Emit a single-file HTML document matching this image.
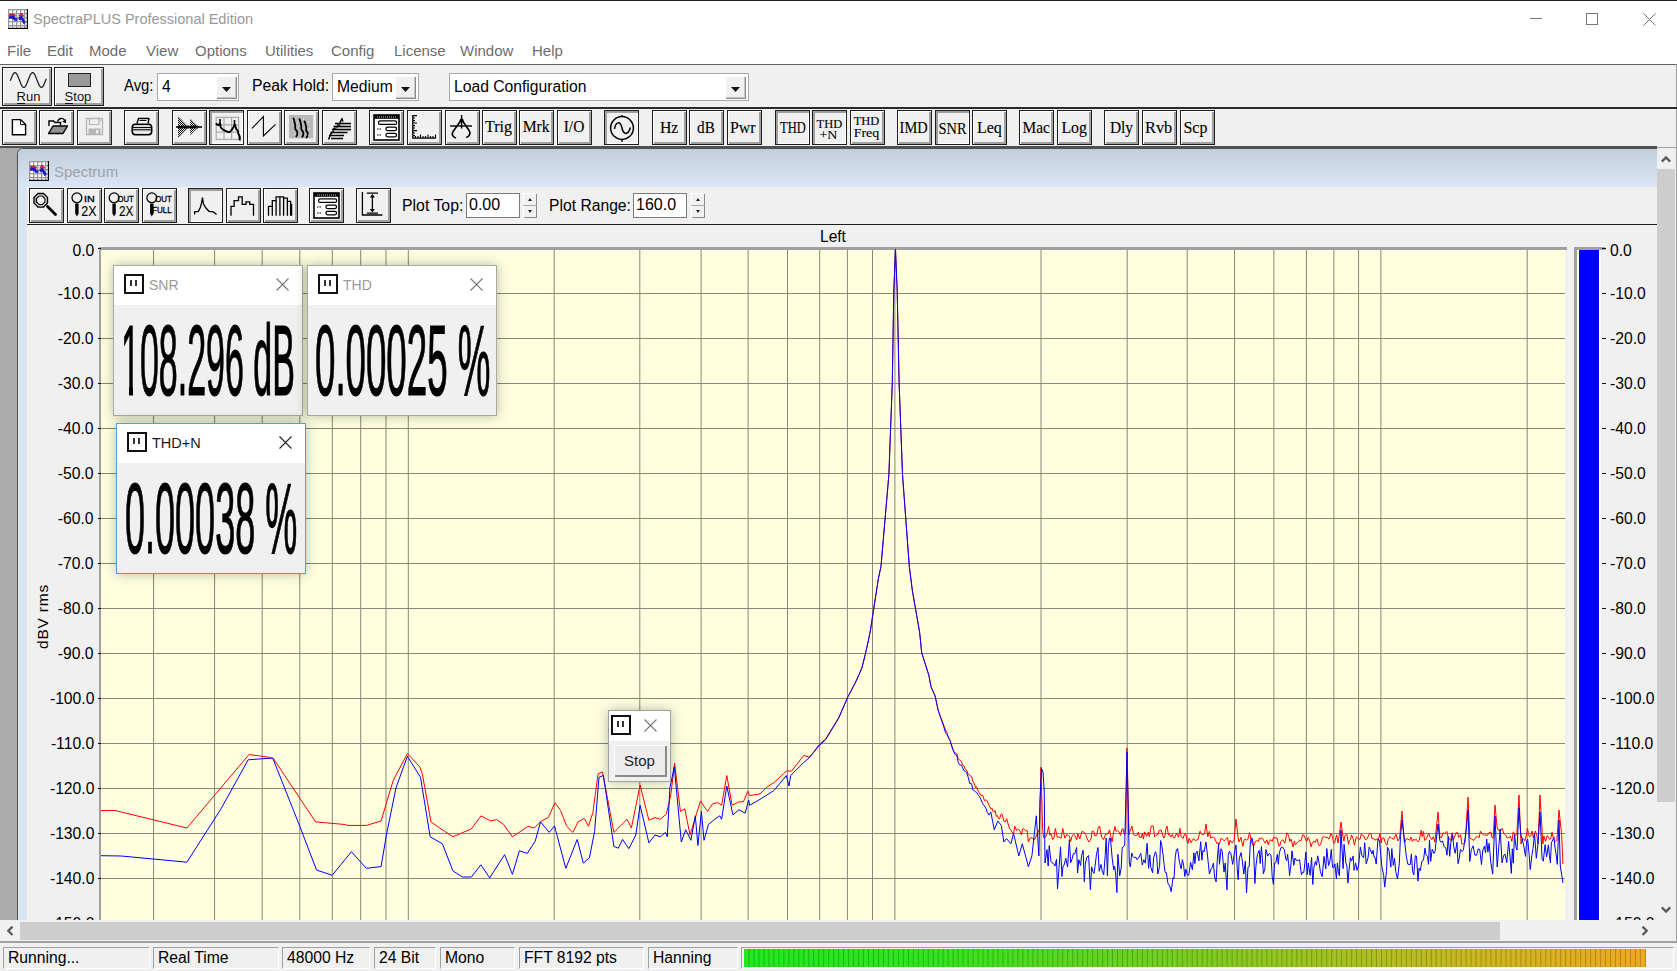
<!DOCTYPE html><html><head><meta charset="utf-8"><title>SpectraPLUS</title><style>
*{margin:0;padding:0;box-sizing:border-box}
html,body{width:1677px;height:971px;overflow:hidden;background:#f0f0f0;font-family:"Liberation Sans",sans-serif;}
.a{position:absolute}
.t{position:absolute;white-space:nowrap;line-height:1}
.btn{position:absolute;width:35px;height:35px;background:#f0f0f0;border:1px solid #1e1e1e;
 box-shadow: inset 1px 1px 0 #fff, inset -2px -2px 0 #a0a0a0;}
.btn.p{box-shadow: inset 2px 2px 0 #a0a0a0, inset -1px -1px 0 #fff;}
.btn svg{position:absolute;left:0;top:0}
.bt{position:absolute;left:0;right:0;text-align:center;font-family:"Liberation Serif",serif;color:#000;white-space:nowrap;line-height:1}
.combo{position:absolute;background:#fff;border:1px solid #a8a8a8;}
.dd{position:absolute;background:#f0f0f0;box-shadow: inset 1px 1px 0 #fff, inset -1px -1px 0 #888, inset -2px -2px 0 #c8c8c8;}
.sp{position:absolute;background:#f0f0f0;}
.panel{position:absolute;background:#f0f0f0;border:1px solid #a0a0a0;box-shadow:0 0 12px rgba(0,0,0,.28);}
.ptitle{position:absolute;left:0;top:0;right:0;background:#fff}
.pbox{position:absolute;border:2px solid #1a1a1a;width:20px;height:20px}
.pbox:before,.pbox:after{content:"";position:absolute;top:5px;width:2px;height:6px;background:#333}
.pbox:before{left:5px}.pbox:after{left:10px}
.sb{position:absolute;top:947px;height:22px;border-top:1px solid #a0a0a0;border-left:1px solid #a0a0a0;border-right:1px solid #fff;border-bottom:1px solid #fff}
.sbt{position:absolute;top:2px;left:4px;font-size:16px;transform:scaleX(0.98);transform-origin:0 0;color:#000;white-space:nowrap;line-height:1}
</style></head><body>
<div class="a" style="left:0;top:0;width:1677px;height:1px;background:#222"></div>
<div class="a" style="left:0;top:1px;width:1677px;height:63px;background:#fff"></div>
<svg class="a" style="left:8px;top:9px" width="20" height="20" viewBox="0 0 20 20"><rect x="0" y="0" width="20" height="20" fill="#fff"/><rect x="0" y="0" width="1.3" height="20" fill="#999"/><rect x="0" y="0" width="20" height="1.3" fill="#999"/><rect x="4" y="0" width="1.3" height="20" fill="#999"/><rect x="0" y="4" width="20" height="1.3" fill="#999"/><rect x="8" y="0" width="1.3" height="20" fill="#999"/><rect x="0" y="8" width="20" height="1.3" fill="#999"/><rect x="12" y="0" width="1.3" height="20" fill="#999"/><rect x="0" y="12" width="20" height="1.3" fill="#999"/><rect x="16" y="0" width="1.3" height="20" fill="#999"/><rect x="0" y="16" width="20" height="1.3" fill="#999"/><polyline points="1,5.8 5.5,5.8 7.5,7.5" fill="none" stroke="#d0203a" stroke-width="2.2"/><polyline points="11,7.5 13,5 15.5,7.5" fill="none" stroke="#d0203a" stroke-width="2"/><polyline points="1,8.5 5,8.2 7,10.5 9.5,10.5" fill="none" stroke="#1818c8" stroke-width="2.6"/><polyline points="11,10.5 13,8.5 15,11 16.5,14.5" fill="none" stroke="#1818d0" stroke-width="2.6"/><rect x="18.8" y="0" width="1.2" height="20" fill="#000"/><rect x="0" y="18.8" width="20" height="1.2" fill="#000"/></svg>
<div class="t" style="left:33px;top:12px;font-size:14.5px;color:#999">SpectraPLUS Professional Edition</div>
<div class="a" style="left:1530px;top:18px;width:12px;height:1px;background:#777"></div>
<div class="a" style="left:1586px;top:13px;width:12px;height:12px;border:1px solid #777"></div>
<svg class="a" style="left:1643px;top:13px" width="13" height="13"><path d="M0.5 0.5L12.5 12.5M12.5 0.5L0.5 12.5" stroke="#777" stroke-width="1"/></svg>
<div class="t" style="left:7px;top:43px;font-size:15px;color:#6d6d6d">File</div>
<div class="t" style="left:47px;top:43px;font-size:15px;color:#6d6d6d">Edit</div>
<div class="t" style="left:89px;top:43px;font-size:15px;color:#6d6d6d">Mode</div>
<div class="t" style="left:146px;top:43px;font-size:15px;color:#6d6d6d">View</div>
<div class="t" style="left:195px;top:43px;font-size:15px;color:#6d6d6d">Options</div>
<div class="t" style="left:265px;top:43px;font-size:15px;color:#6d6d6d">Utilities</div>
<div class="t" style="left:331px;top:43px;font-size:15px;color:#6d6d6d">Config</div>
<div class="t" style="left:394px;top:43px;font-size:15px;color:#6d6d6d">License</div>
<div class="t" style="left:460px;top:43px;font-size:15px;color:#6d6d6d">Window</div>
<div class="t" style="left:532px;top:43px;font-size:15px;color:#6d6d6d">Help</div>
<div class="a" style="left:0;top:64px;width:1677px;height:1px;background:#646464"></div>
<div class="a" style="left:1676px;top:64px;width:1px;height:84px;background:#a0a0a0"></div>
<div class="btn" style="left:2px;top:67px;width:50px;height:39px"><svg width="50" height="39" style="position:absolute;left:-1px;top:-1px"><polyline points="8.3,13.8 8.8,12.5 9.3,11.2 9.8,9.9 10.3,8.8 10.8,7.8 11.3,6.9 11.8,6.3 12.3,5.8 12.8,5.6 13.3,5.6 13.8,5.9 14.3,6.4 14.8,7.1 15.3,8.0 15.8,9.0 16.3,10.2 16.8,11.4 17.3,12.7 17.8,14.1 18.3,15.3 18.8,16.5 19.3,17.6 19.8,18.6 20.3,19.4 20.8,19.9 21.3,20.3 21.8,20.4 22.3,20.3 22.8,19.9 23.3,19.4 23.8,18.6 24.3,17.6 24.8,16.5 25.3,15.3 25.8,14.1 26.3,12.7 26.8,11.4 27.3,10.2 27.8,9.0 28.3,8.0 28.8,7.1 29.3,6.4 29.8,5.9 30.3,5.6 30.8,5.6 31.3,5.8 31.8,6.3 32.3,6.9 32.8,7.8 33.3,8.8 33.8,9.9 34.3,11.2 34.8,12.5 35.3,13.8 35.8,15.1 36.3,16.3 36.8,17.4 37.3,18.4 37.8,19.2 38.3,19.8 38.8,20.2 39.3,20.4 39.8,20.3 40.3,20.0 40.8,19.5 41.3,18.8 41.8,17.8 42.3,16.8 42.8,15.6 43.3,14.3 43.8,13.0 44.3,11.7" fill="none" stroke="#222" stroke-width="1.3"/></svg><div class="t" style="left:13.6px;top:22px;font-size:13px;color:#111">Run</div><div class="a" style="left:14px;top:34.5px;width:8px;height:1px;background:#111"></div></div>
<div class="btn" style="left:54px;top:67px;width:50px;height:39px"><div class="a" style="left:13px;top:5px;width:23px;height:14px;background:#999;border:1.5px solid #222"></div><div class="t" style="left:9.6px;top:22px;font-size:13px;color:#111">Stop</div><div class="a" style="left:9.5px;top:34.5px;width:8.5px;height:1px;background:#111"></div></div>
<div class="t" style="left:124px;top:78px;font-size:16px;color:#000;transform:scaleX(0.93);transform-origin:0 0">Avg:</div>
<div class="combo" style="left:157px;top:73px;width:82px;height:28px"><div class="t" style="left:4px;top:4.5px;font-size:16px;color:#000;transform:scaleX(0.98);transform-origin:0 0">4</div><div class="dd" style="left:58px;top:2px;width:21px;height:23px"><svg width="21" height="23" class="a" style="left:0;top:0"><path d="M6 11h9l-4.5 5z" fill="#111"/></svg></div></div>
<div class="t" style="left:252px;top:78px;font-size:16px;color:#000;transform:scaleX(0.985);transform-origin:0 0">Peak Hold:</div>
<div class="combo" style="left:332px;top:73px;width:87px;height:28px"><div class="t" style="left:4px;top:4.5px;font-size:16px;color:#000;transform:scaleX(0.98);transform-origin:0 0">Medium</div><div class="dd" style="left:62px;top:2px;width:21px;height:23px"><svg width="21" height="23" class="a" style="left:0;top:0"><path d="M6 11h9l-4.5 5z" fill="#111"/></svg></div></div>
<div class="combo" style="left:449px;top:73px;width:300px;height:28px"><div class="t" style="left:4px;top:4.5px;font-size:16px;color:#000;transform:scaleX(0.98);transform-origin:0 0">Load Configuration</div><div class="dd" style="left:275px;top:2px;width:21px;height:23px"><svg width="21" height="23" class="a" style="left:0;top:0"><path d="M6 11h9l-4.5 5z" fill="#111"/></svg></div></div>
<div class="a" style="left:0;top:107px;width:1677px;height:2px;background:#2a2a2a"></div>
<div class="a" style="left:0;top:146px;width:1657px;height:2px;background:#505050"></div>
<div class="a" style="left:1657px;top:147px;width:20px;height:1px;background:#a0a0a0"></div>
<svg width="0" height="0" style="position:absolute"><defs><pattern id="dith" width="2" height="2" patternUnits="userSpaceOnUse"><rect width="1" height="1" fill="#000"/><rect x="1" y="1" width="1" height="1" fill="#000"/></pattern></defs></svg>
<div class="btn" style="left:2px;top:110px;width:35px;height:35px"><svg class="a" style="left:-1px;top:-1px" width="35" height="35" viewBox="0 0 35 35"><path d="M10.4 9.6h8.2l5 5v10.1h-13.2z" fill="#fff" stroke="#000" stroke-width="1.4"/><path d="M18.6 9.6v5h5" fill="none" stroke="#000" stroke-width="1"/></svg></div>
<div class="btn" style="left:39px;top:110px;width:35px;height:35px"><svg class="a" style="left:-1px;top:-1px" width="35" height="35" viewBox="0 0 35 35"><g transform="translate(0,-2.5)"><path d="M10 18.5v-5h4.5l1.5 1.5h5.5v3" fill="#fff" stroke="#000" stroke-width="1.4"/><path d="M9.5 26l4.5-7.5h14.5l-4.5 7.5z" fill="#909090" stroke="#000" stroke-width="1.4" stroke-linejoin="round"/><path d="M18.5 14c1.5-3.5 5-4 7-1.5" fill="none" stroke="#000" stroke-width="1.3"/><path d="M26.8 11.5l0.3 4.3-3.8-1.5z" fill="#000"/></g></svg></div>
<div class="btn" style="left:77px;top:110px;width:35px;height:35px"><svg class="a" style="left:-1px;top:-1px" width="35" height="35" viewBox="0 0 35 35"><g transform="translate(0,-1)"><path d="M9.5 9.5h16v16h-16z" fill="none" stroke="#b4b4b4" stroke-width="1.3"/><path d="M12.5 10v5.5h9.5v-5.5" fill="none" stroke="#b4b4b4" stroke-width="1.2"/><rect x="11.5" y="19.5" width="12" height="6" fill="#b4b4b4"/><rect x="19" y="21" width="2.5" height="3.5" fill="#eee"/><path d="M24 11v2" stroke="#b4b4b4"/></g></svg></div>
<div class="btn" style="left:124px;top:110px;width:35px;height:35px"><svg class="a" style="left:-1px;top:-1px" width="35" height="35" viewBox="0 0 35 35"><path d="M13 13.5l1.5-5h10.5l-1 5" fill="#fff" stroke="#000" stroke-width="1.4" stroke-linejoin="round"/><path d="M15.5 10.5h7" stroke="#000"/><rect x="8.2" y="14.2" width="19.5" height="10.5" rx="3.2" fill="#d8d8d8" stroke="#000" stroke-width="1.5"/><path d="M9 17.5h18M9 19.8h18" stroke="#000" stroke-width="1.1"/><path d="M10 22.2h16" stroke="#fff" stroke-width="1"/></svg></div>
<div class="btn" style="left:172px;top:110px;width:35px;height:35px"><svg class="a" style="left:-1px;top:-1px" width="35" height="35" viewBox="0 0 35 35"><path d="M6 6.5l10.5 10.5-10.5 10.5z" fill="url(#dith)" stroke="none"/><path d="M18.2 9l8 8-8 8z" fill="url(#dith)"/><path d="M4 17h26" stroke="#000" stroke-width="1.6"/><path d="M6 17h20" stroke="#000" stroke-width="3" stroke-dasharray="2.2 0.9"/><path d="M6 6.5l10.5 10.5-10.5 10.5M18.2 9l8 8-8 8" fill="none" stroke="#444" stroke-width="0.6"/></svg></div>
<div class="btn p" style="left:209px;top:110px;width:35px;height:35px"><svg class="a" style="left:-1px;top:-1px" width="35" height="35" viewBox="0 0 35 35"><rect x="7.2" y="7.4" width="22.4" height="22" fill="none" stroke="#aaa" stroke-width="1.2"/><path d="M15 7.4v22M22.6 7.4v22M7.2 14.8h22.4M7.2 22.2h22.4" stroke="#aaa" stroke-width="1.2"/><path d="M6.7 13.5l2 1.5 2.5-1 0.6 3.6 2.5 2.3 4 1.8 2.5 0.4 2.5-3 2.5-4.5 1.5 4.5 1.5 1.5 0.5 3 1.5 3v4" fill="none" stroke="#000" stroke-width="1.9" stroke-linejoin="round"/><path d="M11 9v7M25.5 10v6" stroke="#000" stroke-width="1.6"/></svg></div>
<div class="btn" style="left:247px;top:110px;width:35px;height:35px"><svg class="a" style="left:-1px;top:-1px" width="35" height="35" viewBox="0 0 35 35"><path d="M5 18.4L16.4 6.6V26L28.5 14.3" fill="none" stroke="#000" stroke-width="1.1"/></svg></div>
<div class="btn" style="left:284px;top:110px;width:35px;height:35px"><svg class="a" style="left:-1px;top:-1px" width="35" height="35" viewBox="0 0 35 35"><rect x="5" y="5" width="24.2" height="23.4" fill="#b8b8b8"/><path d="M9 8c2 2 1 4 2 6s-1 4 1 6 2 4 0 7" fill="none" stroke="#000" stroke-width="1.8"/><path d="M15 8.5c2 2 1 4 2 6s-1 4 1 6 2 4 0 7" fill="none" stroke="#000" stroke-width="1.8"/><path d="M20 11c2 2 1 3 2 5s-1 4 1 6 1 4-1 6" fill="none" stroke="#000" stroke-width="1.8"/><path d="M8 10h2M13 13h2M19 9h2M24 12h2M10 24h1M25 19h2M24 25h2" stroke="#fff" stroke-width="1" stroke-dasharray="1 1"/></svg></div>
<div class="btn" style="left:322px;top:110px;width:35px;height:35px"><svg class="a" style="left:-1px;top:-1px" width="35" height="35" viewBox="0 0 35 35"><path d="M13 13.5h16M11.5 16.5h17.5M10 19.5h19M8.5 22.5h17M7 25.5h15M9 28.5h12" stroke="#000" stroke-width="1.6"/><path d="M6.5 29.5l2.5-6 2-2 1-3 3-1 1-3 1.5 1 1-4 1.5-2.5 1 2.5" fill="none" stroke="#000" stroke-width="1.5"/><path d="M13 13.5h16M11.5 16.5h17.5M10 19.5h19" stroke="#888" stroke-width="0.6" transform="translate(0,1.2)"/></svg></div>
<div class="btn" style="left:369px;top:110px;width:35px;height:35px"><svg class="a" style="left:-1px;top:-1px" width="35" height="35" viewBox="0 0 35 35"><rect x="5" y="5" width="25" height="25" fill="#fff" stroke="#000" stroke-width="1.6"/><rect x="5" y="5" width="25" height="3.8" fill="#000"/><path d="M8 7h19" stroke="#fff" stroke-width="0.8" stroke-dasharray="1 1"/><rect x="9.6" y="10.8" width="18" height="3.6" rx="1.5" fill="#fff" stroke="#000" stroke-width="1.3"/><rect x="17" y="17.2" width="10.5" height="3.4" rx="1.5" fill="#fff" stroke="#000" stroke-width="1.3"/><rect x="17" y="23.4" width="10.5" height="3.4" rx="1.5" fill="#fff" stroke="#000" stroke-width="1.3"/><path d="M8 19h5M8 25h5" stroke="#000" stroke-width="1.2" stroke-dasharray="1.5 1"/></svg></div>
<div class="btn" style="left:407px;top:110px;width:35px;height:35px"><svg class="a" style="left:-1px;top:-1px" width="35" height="35" viewBox="0 0 35 35"><path d="M5.8 5v23.2h23" fill="none" stroke="#000" stroke-width="1.3"/><path d="M6 5.6h4M6 8h2M6 10.6h2M6 13h4M6 15.6h2M6 18h2M6 20.6h4M6 23h2M6 25.6h2" stroke="#000" stroke-width="1.1"/><path d="M8.5 28v-2M11 28v-2M13.5 28v-3.5M16 28v-2M18.5 28v-2M21 28v-3.5M23.5 28v-2M26 28v-2M28.5 28v-3.5" stroke="#000" stroke-width="1.1"/></svg></div>
<div class="btn" style="left:445px;top:110px;width:35px;height:35px"><svg class="a" style="left:-1px;top:-1px" width="35" height="35" viewBox="0 0 35 35"><path d="M16.6 5v13.5" stroke="#000" stroke-width="1.4"/><path d="M5 16h22" stroke="#000" stroke-width="1.4"/><path d="M16.6 9.5l-8.5 12c-2 3 0 6 3 6.5M16.6 9.5l7.5 11c2 3 0 6.5-3 7" fill="none" stroke="#000" stroke-width="1.6"/><circle cx="16.6" cy="10.5" r="2" fill="#000"/></svg></div>
<div class="btn" style="left:482px;top:110px;width:35px;height:35px"><svg class="a" style="left:-1px;top:-1px" width="35" height="35" viewBox="0 0 35 35"><text x="3.0" y="22.4" font-family="Liberation Serif" font-size="16" textLength="27.0" lengthAdjust="spacingAndGlyphs" fill="#000" stroke="#000" stroke-width="0.12" >Trig</text></svg></div>
<div class="btn" style="left:519px;top:110px;width:35px;height:35px"><svg class="a" style="left:-1px;top:-1px" width="35" height="35" viewBox="0 0 35 35"><text x="3.7" y="22.4" font-family="Liberation Serif" font-size="16" textLength="27.0" lengthAdjust="spacingAndGlyphs" fill="#000" stroke="#000" stroke-width="0.12" >Mrk</text></svg></div>
<div class="btn" style="left:557px;top:110px;width:35px;height:35px"><svg class="a" style="left:-1px;top:-1px" width="35" height="35" viewBox="0 0 35 35"><text x="6.7" y="22.4" font-family="Liberation Serif" font-size="16" textLength="20.6" lengthAdjust="spacingAndGlyphs" fill="#000" stroke="#000" stroke-width="0.12" >I/O</text></svg></div>
<div class="btn p" style="left:604px;top:110px;width:35px;height:35px"><svg class="a" style="left:-1px;top:-1px" width="35" height="35" viewBox="0 0 35 35"><circle cx="18" cy="18" r="11.4" fill="none" stroke="#000" stroke-width="1.5"/><path d="M18 5v2M18 29v3" stroke="#000" stroke-width="1.3"/><path d="M10.4 19c1.5-8 6-8 7.6-1s6 7.5 8.4-0.5" fill="none" stroke="#000" stroke-width="1.5"/></svg></div>
<div class="btn" style="left:652px;top:110px;width:35px;height:35px"><svg class="a" style="left:-1px;top:-1px" width="35" height="35" viewBox="0 0 35 35"><text x="7.9" y="22.6" font-family="Liberation Serif" font-size="16" textLength="18.4" lengthAdjust="spacingAndGlyphs" fill="#000" stroke="#000" stroke-width="0.12" >Hz</text></svg></div>
<div class="btn" style="left:689px;top:110px;width:35px;height:35px"><svg class="a" style="left:-1px;top:-1px" width="35" height="35" viewBox="0 0 35 35"><text x="8.1" y="22.6" font-family="Liberation Serif" font-size="16" textLength="17.7" lengthAdjust="spacingAndGlyphs" fill="#000" stroke="#000" stroke-width="0.12" >dB</text></svg></div>
<div class="btn" style="left:727px;top:110px;width:35px;height:35px"><svg class="a" style="left:-1px;top:-1px" width="35" height="35" viewBox="0 0 35 35"><text x="3.0" y="22.6" font-family="Liberation Serif" font-size="16" textLength="25.6" lengthAdjust="spacingAndGlyphs" fill="#000" stroke="#000" stroke-width="0.12" >Pwr</text></svg></div>
<div class="btn p" style="left:775px;top:110px;width:35px;height:35px"><svg class="a" style="left:-1px;top:-1px" width="35" height="35" viewBox="0 0 35 35"><text x="5.0" y="23.4" font-family="Liberation Serif" font-size="16" textLength="25.7" lengthAdjust="spacingAndGlyphs" fill="#000" stroke="#000" stroke-width="0.12" >THD</text></svg></div>
<div class="btn p" style="left:812px;top:110px;width:35px;height:35px"><svg class="a" style="left:-1px;top:-1px" width="35" height="35" viewBox="0 0 35 35"><text x="4.5" y="18" font-family="Liberation Serif" font-size="13.5" textLength="25.7" lengthAdjust="spacingAndGlyphs" fill="#000" stroke="#000" stroke-width="0.12" >THD</text><text x="7.4" y="28.8" font-family="Liberation Serif" font-size="13" textLength="17.8" lengthAdjust="spacingAndGlyphs" fill="#000" stroke="#000" stroke-width="0.12" >+N</text></svg></div>
<div class="btn" style="left:850px;top:110px;width:35px;height:35px"><svg class="a" style="left:-1px;top:-1px" width="35" height="35" viewBox="0 0 35 35"><text x="3.7" y="15.2" font-family="Liberation Serif" font-size="13.5" textLength="25.6" lengthAdjust="spacingAndGlyphs" fill="#000" stroke="#000" stroke-width="0.12" >THD</text><text x="3.7" y="26.5" font-family="Liberation Serif" font-size="13" textLength="25.6" lengthAdjust="spacingAndGlyphs" fill="#000" stroke="#000" stroke-width="0.12" >Freq</text></svg></div>
<div class="btn" style="left:897px;top:110px;width:35px;height:35px"><svg class="a" style="left:-1px;top:-1px" width="35" height="35" viewBox="0 0 35 35"><text x="2.6" y="23" font-family="Liberation Serif" font-size="16" textLength="28.0" lengthAdjust="spacingAndGlyphs" fill="#000" stroke="#000" stroke-width="0.12" >IMD</text></svg></div>
<div class="btn p" style="left:935px;top:110px;width:35px;height:35px"><svg class="a" style="left:-1px;top:-1px" width="35" height="35" viewBox="0 0 35 35"><text x="3.5" y="23.5" font-family="Liberation Serif" font-size="16" textLength="28.0" lengthAdjust="spacingAndGlyphs" fill="#000" stroke="#000" stroke-width="0.12" >SNR</text></svg></div>
<div class="btn" style="left:972px;top:110px;width:35px;height:35px"><svg class="a" style="left:-1px;top:-1px" width="35" height="35" viewBox="0 0 35 35"><text x="4.9" y="23" font-family="Liberation Serif" font-size="16" textLength="24.9" lengthAdjust="spacingAndGlyphs" fill="#000" stroke="#000" stroke-width="0.12" >Leq</text></svg></div>
<div class="btn" style="left:1019px;top:110px;width:35px;height:35px"><svg class="a" style="left:-1px;top:-1px" width="35" height="35" viewBox="0 0 35 35"><text x="3.5" y="23" font-family="Liberation Serif" font-size="16" textLength="27.3" lengthAdjust="spacingAndGlyphs" fill="#000" stroke="#000" stroke-width="0.12" >Mac</text></svg></div>
<div class="btn" style="left:1057px;top:110px;width:35px;height:35px"><svg class="a" style="left:-1px;top:-1px" width="35" height="35" viewBox="0 0 35 35"><text x="4.4" y="23" font-family="Liberation Serif" font-size="16" textLength="25.5" lengthAdjust="spacingAndGlyphs" fill="#000" stroke="#000" stroke-width="0.12" >Log</text></svg></div>
<div class="btn" style="left:1104px;top:110px;width:35px;height:35px"><svg class="a" style="left:-1px;top:-1px" width="35" height="35" viewBox="0 0 35 35"><text x="5.9" y="22.8" font-family="Liberation Serif" font-size="16" textLength="23.2" lengthAdjust="spacingAndGlyphs" fill="#000" stroke="#000" stroke-width="0.12" >Dly</text></svg></div>
<div class="btn" style="left:1142px;top:110px;width:35px;height:35px"><svg class="a" style="left:-1px;top:-1px" width="35" height="35" viewBox="0 0 35 35"><text x="3.0" y="22.8" font-family="Liberation Serif" font-size="16" textLength="27.3" lengthAdjust="spacingAndGlyphs" fill="#000" stroke="#000" stroke-width="0.12" >Rvb</text></svg></div>
<div class="btn" style="left:1180px;top:110px;width:35px;height:35px"><svg class="a" style="left:-1px;top:-1px" width="35" height="35" viewBox="0 0 35 35"><text x="3.5" y="22.8" font-family="Liberation Serif" font-size="16" textLength="23.9" lengthAdjust="spacingAndGlyphs" fill="#000" stroke="#000" stroke-width="0.12" >Scp</text></svg></div>
<div class="a" style="left:0;top:148px;width:1657px;height:772px;background:#ababab"></div>
<div class="a" style="left:17px;top:148px;width:1660px;height:790px;background:#d3e1ef;border-left:1px solid #4f4f4f;border-top:1px solid #4f4f4f;border-top-left-radius:6px;overflow:hidden"><div class="a" style="left:0;top:38px;width:14px;height:760px;background:linear-gradient(90deg,#e2e8f4 0%,#d5e4f2 25%,#dce6f0 60%,#edf0ee 85%,#f0f0f0 100%)"></div><div class="a" style="left:0;top:0;width:1660px;height:38px;background:linear-gradient(#c0cedc,#dae6f3)"></div></div>
<svg class="a" style="left:29px;top:161px" width="20" height="20" viewBox="0 0 20 20"><rect x="0" y="0" width="20" height="20" fill="#fff"/><rect x="0" y="0" width="1.3" height="20" fill="#999"/><rect x="0" y="0" width="20" height="1.3" fill="#999"/><rect x="4" y="0" width="1.3" height="20" fill="#999"/><rect x="0" y="4" width="20" height="1.3" fill="#999"/><rect x="8" y="0" width="1.3" height="20" fill="#999"/><rect x="0" y="8" width="20" height="1.3" fill="#999"/><rect x="12" y="0" width="1.3" height="20" fill="#999"/><rect x="0" y="12" width="20" height="1.3" fill="#999"/><rect x="16" y="0" width="1.3" height="20" fill="#999"/><rect x="0" y="16" width="20" height="1.3" fill="#999"/><polyline points="1,5.8 5.5,5.8 7.5,7.5" fill="none" stroke="#d0203a" stroke-width="2.2"/><polyline points="11,7.5 13,5 15.5,7.5" fill="none" stroke="#d0203a" stroke-width="2"/><polyline points="1,8.5 5,8.2 7,10.5 9.5,10.5" fill="none" stroke="#1818c8" stroke-width="2.6"/><polyline points="11,10.5 13,8.5 15,11 16.5,14.5" fill="none" stroke="#1818d0" stroke-width="2.6"/><rect x="18.8" y="0" width="1.2" height="20" fill="#000"/><rect x="0" y="18.8" width="20" height="1.2" fill="#000"/></svg>
<div class="t" style="left:54px;top:164px;font-size:15px;color:#9aa3ad">Spectrum</div>
<div class="a" style="left:27px;top:187px;width:1630px;height:733px;background:#f0f0f0"></div>
<div class="a" style="left:27px;top:224px;width:1630px;height:1px;background:#1a1a1a"></div>
<div class="btn" style="left:29px;top:188px;width:35px;height:35px"><svg class="a" style="left:-1px;top:-1px" width="35" height="35" viewBox="0 0 35 35"><path d="M9 5.5h5.5l4 4v5.5l-4 4h-5.5l-4-4v-5.5z" fill="none" stroke="#000" stroke-width="1.4"/><path d="M10 8h3.5l2.5 2.5v3.5l-2.5 2.5h-3.5l-2.5-2.5v-3.5z" fill="none" stroke="#000" stroke-width="1.2"/><path d="M6.5 10v5M17 10v5M10 6.6h4M10 18h4" stroke="#999" stroke-width="1"/><path d="M18.5 18.5l8 8" stroke="#000" stroke-width="2.8" stroke-linecap="round"/></svg></div>
<div class="btn" style="left:67px;top:188px;width:35px;height:35px"><svg class="a" style="left:-1px;top:-1px" width="35" height="35" viewBox="0 0 35 35"><circle cx="9.9" cy="9.8" r="4.9" fill="none" stroke="#000" stroke-width="1.3"/><path d="M8.2 15.6h3.4v10l-1.7 2.8-1.7-2.8z" fill="#000"/><text x="17.0" y="13.5" font-family="Liberation Sans" font-size="8.8" textLength="10.7" lengthAdjust="spacingAndGlyphs" fill="#000" stroke="#000" stroke-width="0.3">IN</text><text x="14.3" y="27.8" font-family="Liberation Sans" font-size="13.8" textLength="15.2" lengthAdjust="spacingAndGlyphs" fill="#000" stroke="#000" stroke-width="0.1">2X</text></svg></div>
<div class="btn" style="left:104px;top:188px;width:35px;height:35px"><svg class="a" style="left:-1px;top:-1px" width="35" height="35" viewBox="0 0 35 35"><circle cx="10.1" cy="9.8" r="4.9" fill="none" stroke="#000" stroke-width="1.3"/><path d="M8.399999999999999 15.6h3.4v10l-1.7 2.8-1.7-2.8z" fill="#000"/><text x="13.5" y="13.5" font-family="Liberation Sans" font-size="8.8" textLength="16.2" lengthAdjust="spacingAndGlyphs" fill="#000" stroke="#000" stroke-width="0.3">OUT</text><text x="14.9" y="27.8" font-family="Liberation Sans" font-size="13.8" textLength="14.4" lengthAdjust="spacingAndGlyphs" fill="#000" stroke="#000" stroke-width="0.1">2X</text></svg></div>
<div class="btn" style="left:142px;top:188px;width:35px;height:35px"><svg class="a" style="left:-1px;top:-1px" width="35" height="35" viewBox="0 0 35 35"><circle cx="9.8" cy="9.8" r="4.9" fill="none" stroke="#000" stroke-width="1.3"/><path d="M8.1 15.6h3.4v10l-1.7 2.8-1.7-2.8z" fill="#000"/><text x="13.2" y="13.5" font-family="Liberation Sans" font-size="8.8" textLength="16.6" lengthAdjust="spacingAndGlyphs" fill="#000" stroke="#000" stroke-width="0.3">OUT</text><text x="10.0" y="24.5" font-family="Liberation Sans" font-size="8.5" textLength="19.8" lengthAdjust="spacingAndGlyphs" fill="#000" stroke="#000" stroke-width="0.3">FULL</text></svg></div>
<div class="btn p" style="left:188px;top:188px;width:35px;height:35px"><svg class="a" style="left:-1px;top:-1px" width="35" height="35" viewBox="0 0 35 35"><path d="M6.6 26.4v-2.5l3.8-0.6 1.9-3.8 1.2-4.3 1-5.7 0.9 6.3 2.5 4.2 3.1 3.3 4.4 0.6 3.2 2.5" fill="none" stroke="#000" stroke-width="1.3"/></svg></div>
<div class="btn" style="left:226px;top:188px;width:35px;height:35px"><svg class="a" style="left:-1px;top:-1px" width="35" height="35" viewBox="0 0 35 35"><path d="M5 27.7v-9.4h3.1v-5.6h4.4v-3.8h3.7v7.5h3.8v-2.5h3.7v2.5h3.8v11.3" fill="none" stroke="#000" stroke-width="1.3"/></svg></div>
<div class="btn" style="left:263px;top:188px;width:35px;height:35px"><svg class="a" style="left:-1px;top:-1px" width="35" height="35" viewBox="0 0 35 35"><path d="M5.5 27.7v-9.4h3.8v-5.6h3.8v-3.8h7.5v1.2h3.8v3.2h3.2v3.1h1v11.3" fill="none" stroke="#000" stroke-width="1.3"/><path d="M9.3 27.7v-9.4M13.1 27.7v-15M16.9 27.7v-18.8M20.6 27.7v-17.6M24.4 27.7v-14.4M27.6 27.7v-11.3" stroke="#000" stroke-width="1.3"/></svg></div>
<div class="btn" style="left:309px;top:188px;width:35px;height:35px"><svg class="a" style="left:-1px;top:-1px" width="35" height="35" viewBox="0 0 35 35"><rect x="5" y="5" width="25" height="25" fill="#fff" stroke="#000" stroke-width="1.6"/><rect x="5" y="5" width="25" height="3.8" fill="#000"/><path d="M8 7h19" stroke="#fff" stroke-width="0.8" stroke-dasharray="1 1"/><rect x="9.6" y="10.8" width="18" height="3.6" rx="1.5" fill="#fff" stroke="#000" stroke-width="1.3"/><rect x="17" y="17.2" width="10.5" height="3.4" rx="1.5" fill="#fff" stroke="#000" stroke-width="1.3"/><rect x="17" y="23.4" width="10.5" height="3.4" rx="1.5" fill="#fff" stroke="#000" stroke-width="1.3"/><path d="M8 19h5M8 25h5" stroke="#000" stroke-width="1.2" stroke-dasharray="1.5 1"/></svg></div>
<div class="btn" style="left:356px;top:188px;width:35px;height:35px"><svg class="a" style="left:-1px;top:-1px" width="35" height="35" viewBox="0 0 35 35"><path d="M6.4 3.9v23.1h20" fill="none" stroke="#000" stroke-width="1.3"/><path d="M10.8 5.1h11.2M10.8 25.2h11.2M16.4 7v16.5" stroke="#000" stroke-width="1.3"/><path d="M13.9 9.5l2.5-3.5 2.5 3.5zM13.9 21l2.5 3.5 2.5-3.5z" fill="#000"/></svg></div>
<div class="t" style="left:402px;top:197.5px;font-size:16px;color:#000;transform:scaleX(0.99);transform-origin:0 0">Plot Top:</div>
<div class="combo" style="left:466px;top:193px;width:54px;height:25px;border-color:#7a7a7a"><div class="t" style="left:2px;top:2.5px;font-size:16px">0.00</div></div>
<div class="a" style="left:523px;top:193px;width:14px;height:25px;background:#f0f0f0;box-shadow:inset 1px 1px 0 #fff,inset -1px -1px 0 #888"><svg class="a" style="left:0;top:0" width="14" height="25"><path d="M0 12.5h14" stroke="#aaa"/><path d="M5 8h4l-2-3z M5 17h4l-2 3z" fill="#222"/></svg></div>
<div class="t" style="left:549px;top:197.5px;font-size:16px;color:#000;transform:scaleX(0.98);transform-origin:0 0">Plot Range:</div>
<div class="combo" style="left:633px;top:193px;width:54px;height:25px;border-color:#7a7a7a"><div class="t" style="left:2px;top:2.5px;font-size:16px">160.0</div></div>
<div class="a" style="left:691px;top:193px;width:14px;height:25px;background:#f0f0f0;box-shadow:inset 1px 1px 0 #fff,inset -1px -1px 0 #888"><svg class="a" style="left:0;top:0" width="14" height="25"><path d="M0 12.5h14" stroke="#aaa"/><path d="M5 8h4l-2-3z M5 17h4l-2 3z" fill="#222"/></svg></div>
<div class="t" style="left:819.5px;top:229.3px;font-size:16px;color:#000;transform:scaleX(0.97);transform-origin:0 0">Left</div>
<svg class="a" style="left:0;top:0" width="1677" height="920" viewBox="0 0 1677 920"><rect x="101" y="249" width="1464" height="680" fill="#ffffe0"/><line x1="153.55" y1="249" x2="153.55" y2="920" stroke="#888674" stroke-width="1"/><line x1="214.6" y1="249" x2="214.6" y2="920" stroke="#888674" stroke-width="1"/><line x1="262.2" y1="249" x2="262.2" y2="920" stroke="#888674" stroke-width="1"/><line x1="299.8" y1="249" x2="299.8" y2="920" stroke="#888674" stroke-width="1"/><line x1="332.3" y1="249" x2="332.3" y2="920" stroke="#888674" stroke-width="1"/><line x1="360.7" y1="249" x2="360.7" y2="920" stroke="#888674" stroke-width="1"/><line x1="386" y1="249" x2="386" y2="920" stroke="#888674" stroke-width="1"/><line x1="408.3" y1="249" x2="408.3" y2="920" stroke="#888674" stroke-width="1"/><line x1="554.2" y1="249" x2="554.2" y2="920" stroke="#888674" stroke-width="1"/><line x1="639.8" y1="249" x2="639.8" y2="920" stroke="#888674" stroke-width="1"/><line x1="701.1" y1="249" x2="701.1" y2="920" stroke="#888674" stroke-width="1"/><line x1="748.1" y1="249" x2="748.1" y2="920" stroke="#888674" stroke-width="1"/><line x1="787.5" y1="249" x2="787.5" y2="920" stroke="#888674" stroke-width="1"/><line x1="819.7" y1="249" x2="819.7" y2="920" stroke="#888674" stroke-width="1"/><line x1="847.4" y1="249" x2="847.4" y2="920" stroke="#888674" stroke-width="1"/><line x1="872.5" y1="249" x2="872.5" y2="920" stroke="#888674" stroke-width="1"/><line x1="894.9" y1="249" x2="894.9" y2="920" stroke="#888674" stroke-width="1"/><line x1="1041.0" y1="249" x2="1041.0" y2="920" stroke="#888674" stroke-width="1"/><line x1="1127.2" y1="249" x2="1127.2" y2="920" stroke="#888674" stroke-width="1"/><line x1="1187.2" y1="249" x2="1187.2" y2="920" stroke="#888674" stroke-width="1"/><line x1="1234.6" y1="249" x2="1234.6" y2="920" stroke="#888674" stroke-width="1"/><line x1="1273.9" y1="249" x2="1273.9" y2="920" stroke="#888674" stroke-width="1"/><line x1="1306.4" y1="249" x2="1306.4" y2="920" stroke="#888674" stroke-width="1"/><line x1="1333.9" y1="249" x2="1333.9" y2="920" stroke="#888674" stroke-width="1"/><line x1="1358.6" y1="249" x2="1358.6" y2="920" stroke="#888674" stroke-width="1"/><line x1="1380.9" y1="249" x2="1380.9" y2="920" stroke="#888674" stroke-width="1"/><line x1="1527.2" y1="249" x2="1527.2" y2="920" stroke="#888674" stroke-width="1"/><line x1="101" y1="293.5" x2="1565" y2="293.5" stroke="#888674" stroke-width="1"/><line x1="101" y1="338.5" x2="1565" y2="338.5" stroke="#888674" stroke-width="1"/><line x1="101" y1="383.5" x2="1565" y2="383.5" stroke="#888674" stroke-width="1"/><line x1="101" y1="428.5" x2="1565" y2="428.5" stroke="#888674" stroke-width="1"/><line x1="101" y1="473.5" x2="1565" y2="473.5" stroke="#888674" stroke-width="1"/><line x1="101" y1="518.5" x2="1565" y2="518.5" stroke="#888674" stroke-width="1"/><line x1="101" y1="563.5" x2="1565" y2="563.5" stroke="#888674" stroke-width="1"/><line x1="101" y1="608.5" x2="1565" y2="608.5" stroke="#888674" stroke-width="1"/><line x1="101" y1="653.5" x2="1565" y2="653.5" stroke="#888674" stroke-width="1"/><line x1="101" y1="698.5" x2="1565" y2="698.5" stroke="#888674" stroke-width="1"/><line x1="101" y1="743.5" x2="1565" y2="743.5" stroke="#888674" stroke-width="1"/><line x1="101" y1="788.5" x2="1565" y2="788.5" stroke="#888674" stroke-width="1"/><line x1="101" y1="833.5" x2="1565" y2="833.5" stroke="#888674" stroke-width="1"/><line x1="101" y1="878.5" x2="1565" y2="878.5" stroke="#888674" stroke-width="1"/><line x1="101" y1="923.5" x2="1565" y2="923.5" stroke="#888674" stroke-width="1"/><rect x="99" y="247" width="1468" height="3" fill="#a0a0a0"/><rect x="99" y="247" width="2" height="680" fill="#a0a0a0"/><rect x="98" y="248" width="3" height="1" fill="#111"/><rect x="98" y="293" width="3" height="1" fill="#111"/><rect x="98" y="338" width="3" height="1" fill="#111"/><rect x="98" y="383" width="3" height="1" fill="#111"/><rect x="98" y="428" width="3" height="1" fill="#111"/><rect x="98" y="473" width="3" height="1" fill="#111"/><rect x="98" y="518" width="3" height="1" fill="#111"/><rect x="98" y="563" width="3" height="1" fill="#111"/><rect x="98" y="608" width="3" height="1" fill="#111"/><rect x="98" y="653" width="3" height="1" fill="#111"/><rect x="98" y="698" width="3" height="1" fill="#111"/><rect x="98" y="743" width="3" height="1" fill="#111"/><rect x="98" y="788" width="3" height="1" fill="#111"/><rect x="98" y="833" width="3" height="1" fill="#111"/><rect x="98" y="878" width="3" height="1" fill="#111"/><rect x="98" y="923" width="3" height="1" fill="#111"/></svg>
<div class="t" style="right:1583.1px;top:242.6px;font-size:16px;color:#000;text-align:right;transform:scaleX(0.98);transform-origin:100% 0">0.0</div>
<div class="t" style="right:1583.1px;top:286.4px;font-size:16px;color:#000;text-align:right;transform:scaleX(0.98);transform-origin:100% 0">-10.0</div>
<div class="t" style="right:1583.1px;top:331.4px;font-size:16px;color:#000;text-align:right;transform:scaleX(0.98);transform-origin:100% 0">-20.0</div>
<div class="t" style="right:1583.1px;top:376.4px;font-size:16px;color:#000;text-align:right;transform:scaleX(0.98);transform-origin:100% 0">-30.0</div>
<div class="t" style="right:1583.1px;top:421.4px;font-size:16px;color:#000;text-align:right;transform:scaleX(0.98);transform-origin:100% 0">-40.0</div>
<div class="t" style="right:1583.1px;top:466.4px;font-size:16px;color:#000;text-align:right;transform:scaleX(0.98);transform-origin:100% 0">-50.0</div>
<div class="t" style="right:1583.1px;top:511.4px;font-size:16px;color:#000;text-align:right;transform:scaleX(0.98);transform-origin:100% 0">-60.0</div>
<div class="t" style="right:1583.1px;top:556.4px;font-size:16px;color:#000;text-align:right;transform:scaleX(0.98);transform-origin:100% 0">-70.0</div>
<div class="t" style="right:1583.1px;top:601.4px;font-size:16px;color:#000;text-align:right;transform:scaleX(0.98);transform-origin:100% 0">-80.0</div>
<div class="t" style="right:1583.1px;top:646.4px;font-size:16px;color:#000;text-align:right;transform:scaleX(0.98);transform-origin:100% 0">-90.0</div>
<div class="t" style="right:1583.1px;top:691.4px;font-size:16px;color:#000;text-align:right;transform:scaleX(0.98);transform-origin:100% 0">-100.0</div>
<div class="t" style="right:1583.1px;top:736.4px;font-size:16px;color:#000;text-align:right;transform:scaleX(0.98);transform-origin:100% 0">-110.0</div>
<div class="t" style="right:1583.1px;top:781.4px;font-size:16px;color:#000;text-align:right;transform:scaleX(0.98);transform-origin:100% 0">-120.0</div>
<div class="t" style="right:1583.1px;top:826.4px;font-size:16px;color:#000;text-align:right;transform:scaleX(0.98);transform-origin:100% 0">-130.0</div>
<div class="t" style="right:1583.1px;top:871.4px;font-size:16px;color:#000;text-align:right;transform:scaleX(0.98);transform-origin:100% 0">-140.0</div>
<div class="t" style="right:1583.1px;top:916.4px;font-size:16px;color:#000;text-align:right;transform:scaleX(0.98);transform-origin:100% 0">-150.0</div>
<div class="t" style="left:35px;top:649px;font-size:15.5px;letter-spacing:0.8px;color:#000;transform:rotate(-90deg);transform-origin:0 0">dBV rms</div>
<div class="a" style="left:1574px;top:247px;width:3px;height:680px;background:#a0a0a0"></div>
<div class="a" style="left:1574px;top:247px;width:31px;height:3px;background:#a0a0a0"></div>
<div class="a" style="left:1577px;top:250px;width:24px;height:680px;background:#fff"></div>
<div class="a" style="left:1579px;top:250px;width:20px;height:680px;background:#0000ff"></div>
<div class="a" style="left:1602px;top:248px;width:4px;height:1px;background:#111"></div>
<div class="t" style="left:1609.5px;top:242.6px;font-size:16px;color:#000;transform:scaleX(0.98);transform-origin:0 0">0.0</div>
<div class="a" style="left:1602px;top:293px;width:4px;height:1px;background:#111"></div>
<div class="t" style="left:1609.5px;top:286.4px;font-size:16px;color:#000;transform:scaleX(0.98);transform-origin:0 0">-10.0</div>
<div class="a" style="left:1602px;top:338px;width:4px;height:1px;background:#111"></div>
<div class="t" style="left:1609.5px;top:331.4px;font-size:16px;color:#000;transform:scaleX(0.98);transform-origin:0 0">-20.0</div>
<div class="a" style="left:1602px;top:383px;width:4px;height:1px;background:#111"></div>
<div class="t" style="left:1609.5px;top:376.4px;font-size:16px;color:#000;transform:scaleX(0.98);transform-origin:0 0">-30.0</div>
<div class="a" style="left:1602px;top:428px;width:4px;height:1px;background:#111"></div>
<div class="t" style="left:1609.5px;top:421.4px;font-size:16px;color:#000;transform:scaleX(0.98);transform-origin:0 0">-40.0</div>
<div class="a" style="left:1602px;top:473px;width:4px;height:1px;background:#111"></div>
<div class="t" style="left:1609.5px;top:466.4px;font-size:16px;color:#000;transform:scaleX(0.98);transform-origin:0 0">-50.0</div>
<div class="a" style="left:1602px;top:518px;width:4px;height:1px;background:#111"></div>
<div class="t" style="left:1609.5px;top:511.4px;font-size:16px;color:#000;transform:scaleX(0.98);transform-origin:0 0">-60.0</div>
<div class="a" style="left:1602px;top:563px;width:4px;height:1px;background:#111"></div>
<div class="t" style="left:1609.5px;top:556.4px;font-size:16px;color:#000;transform:scaleX(0.98);transform-origin:0 0">-70.0</div>
<div class="a" style="left:1602px;top:608px;width:4px;height:1px;background:#111"></div>
<div class="t" style="left:1609.5px;top:601.4px;font-size:16px;color:#000;transform:scaleX(0.98);transform-origin:0 0">-80.0</div>
<div class="a" style="left:1602px;top:653px;width:4px;height:1px;background:#111"></div>
<div class="t" style="left:1609.5px;top:646.4px;font-size:16px;color:#000;transform:scaleX(0.98);transform-origin:0 0">-90.0</div>
<div class="a" style="left:1602px;top:698px;width:4px;height:1px;background:#111"></div>
<div class="t" style="left:1609.5px;top:691.4px;font-size:16px;color:#000;transform:scaleX(0.98);transform-origin:0 0">-100.0</div>
<div class="a" style="left:1602px;top:743px;width:4px;height:1px;background:#111"></div>
<div class="t" style="left:1609.5px;top:736.4px;font-size:16px;color:#000;transform:scaleX(0.98);transform-origin:0 0">-110.0</div>
<div class="a" style="left:1602px;top:788px;width:4px;height:1px;background:#111"></div>
<div class="t" style="left:1609.5px;top:781.4px;font-size:16px;color:#000;transform:scaleX(0.98);transform-origin:0 0">-120.0</div>
<div class="a" style="left:1602px;top:833px;width:4px;height:1px;background:#111"></div>
<div class="t" style="left:1609.5px;top:826.4px;font-size:16px;color:#000;transform:scaleX(0.98);transform-origin:0 0">-130.0</div>
<div class="a" style="left:1602px;top:878px;width:4px;height:1px;background:#111"></div>
<div class="t" style="left:1609.5px;top:871.4px;font-size:16px;color:#000;transform:scaleX(0.98);transform-origin:0 0">-140.0</div>
<div class="a" style="left:1602px;top:923px;width:4px;height:1px;background:#111"></div>
<div class="t" style="left:1609.5px;top:916.4px;font-size:16px;color:#000;transform:scaleX(0.98);transform-origin:0 0">-150.0</div>
<div class="a" style="left:1657px;top:148px;width:20px;height:794px;background:#f0f0f0"></div>
<div class="a" style="left:1657px;top:169px;width:18px;height:633px;background:#cdcdcd"></div>
<svg class="a" style="left:1659px;top:153px" width="14" height="12"><path d="M2.8 8.6l4.2-4.2 4.2 4.2" fill="none" stroke="#5a5a5a" stroke-width="2.3"/></svg>
<svg class="a" style="left:1659px;top:904px" width="14" height="12"><path d="M2.8 3.4l4.2 4.2 4.2-4.2" fill="none" stroke="#5a5a5a" stroke-width="2.3"/></svg>
<div class="a" style="left:0;top:920px;width:1677px;height:22px;background:#f0f0f0"></div>
<div class="a" style="left:20px;top:922px;width:1480px;height:18px;background:#cdcdcd"></div>
<svg class="a" style="left:2px;top:924px" width="14" height="14"><path d="M10.5 2.6l-4.2 4.2 4.2 4.2" fill="none" stroke="#5a5a5a" stroke-width="2.3"/></svg>
<svg class="a" style="left:1638px;top:924px" width="14" height="14"><path d="M4.5 2.6l4.2 4.2-4.2 4.2" fill="none" stroke="#5a5a5a" stroke-width="2.3"/></svg>
<div class="a" style="left:1676px;top:148px;width:1px;height:823px;background:#a0a0a0"></div>
<div class="a" style="left:0;top:941px;width:1677px;height:2px;background:#a0a0a0"></div>
<div class="a" style="left:0;top:943px;width:1677px;height:28px;background:#f0f0f0"></div>
<div class="sb" style="left:3px;width:147px"><div class="sbt">Running...</div></div>
<div class="sb" style="left:153px;width:126px"><div class="sbt">Real Time</div></div>
<div class="sb" style="left:282px;width:88px"><div class="sbt">48000 Hz</div></div>
<div class="sb" style="left:374px;width:62px"><div class="sbt">24 Bit</div></div>
<div class="sb" style="left:440px;width:75px"><div class="sbt">Mono</div></div>
<div class="sb" style="left:519px;width:125px"><div class="sbt">FFT 8192 pts</div></div>
<div class="sb" style="left:648px;width:90px"><div class="sbt">Hanning</div></div>
<div class="sb" style="left:741px;width:933px"><div class="sbt"></div></div>
<div class="a" style="left:744px;top:949px;width:902px;height:18px;background:linear-gradient(90deg,#20e820 0%,#30e420 20%,#88c820 55%,#c8b820 80%,#f0a820 100%)"></div><svg class="a" style="left:744px;top:949px" width="902" height="18"><rect x="4.5" y="0" width="1" height="18" fill="#000" fill-opacity="0.22"/><rect x="9.5" y="0" width="1" height="18" fill="#000" fill-opacity="0.22"/><rect x="14.5" y="0" width="1" height="18" fill="#000" fill-opacity="0.22"/><rect x="19.4" y="0" width="1" height="18" fill="#000" fill-opacity="0.22"/><rect x="24.4" y="0" width="1" height="18" fill="#000" fill-opacity="0.22"/><rect x="29.4" y="0" width="1" height="18" fill="#000" fill-opacity="0.22"/><rect x="34.4" y="0" width="1" height="18" fill="#000" fill-opacity="0.22"/><rect x="39.4" y="0" width="1" height="18" fill="#000" fill-opacity="0.22"/><rect x="44.3" y="0" width="1" height="18" fill="#000" fill-opacity="0.22"/><rect x="49.3" y="0" width="1" height="18" fill="#000" fill-opacity="0.22"/><rect x="54.3" y="0" width="1" height="18" fill="#000" fill-opacity="0.22"/><rect x="59.3" y="0" width="1" height="18" fill="#000" fill-opacity="0.22"/><rect x="64.3" y="0" width="1" height="18" fill="#000" fill-opacity="0.22"/><rect x="69.2" y="0" width="1" height="18" fill="#000" fill-opacity="0.22"/><rect x="74.2" y="0" width="1" height="18" fill="#000" fill-opacity="0.22"/><rect x="79.2" y="0" width="1" height="18" fill="#000" fill-opacity="0.22"/><rect x="84.2" y="0" width="1" height="18" fill="#000" fill-opacity="0.22"/><rect x="89.2" y="0" width="1" height="18" fill="#000" fill-opacity="0.22"/><rect x="94.1" y="0" width="1" height="18" fill="#000" fill-opacity="0.22"/><rect x="99.1" y="0" width="1" height="18" fill="#000" fill-opacity="0.22"/><rect x="104.1" y="0" width="1" height="18" fill="#000" fill-opacity="0.22"/><rect x="109.1" y="0" width="1" height="18" fill="#000" fill-opacity="0.22"/><rect x="114.1" y="0" width="1" height="18" fill="#000" fill-opacity="0.22"/><rect x="119.0" y="0" width="1" height="18" fill="#000" fill-opacity="0.22"/><rect x="124.0" y="0" width="1" height="18" fill="#000" fill-opacity="0.22"/><rect x="129.0" y="0" width="1" height="18" fill="#000" fill-opacity="0.22"/><rect x="134.0" y="0" width="1" height="18" fill="#000" fill-opacity="0.22"/><rect x="139.0" y="0" width="1" height="18" fill="#000" fill-opacity="0.22"/><rect x="143.9" y="0" width="1" height="18" fill="#000" fill-opacity="0.22"/><rect x="148.9" y="0" width="1" height="18" fill="#000" fill-opacity="0.22"/><rect x="153.9" y="0" width="1" height="18" fill="#000" fill-opacity="0.22"/><rect x="158.9" y="0" width="1" height="18" fill="#000" fill-opacity="0.22"/><rect x="163.9" y="0" width="1" height="18" fill="#000" fill-opacity="0.22"/><rect x="168.8" y="0" width="1" height="18" fill="#000" fill-opacity="0.22"/><rect x="173.8" y="0" width="1" height="18" fill="#000" fill-opacity="0.22"/><rect x="178.8" y="0" width="1" height="18" fill="#000" fill-opacity="0.22"/><rect x="183.8" y="0" width="1" height="18" fill="#000" fill-opacity="0.22"/><rect x="188.8" y="0" width="1" height="18" fill="#000" fill-opacity="0.22"/><rect x="193.7" y="0" width="1" height="18" fill="#000" fill-opacity="0.22"/><rect x="198.7" y="0" width="1" height="18" fill="#000" fill-opacity="0.22"/><rect x="203.7" y="0" width="1" height="18" fill="#000" fill-opacity="0.22"/><rect x="208.7" y="0" width="1" height="18" fill="#000" fill-opacity="0.22"/><rect x="213.7" y="0" width="1" height="18" fill="#000" fill-opacity="0.22"/><rect x="218.6" y="0" width="1" height="18" fill="#000" fill-opacity="0.22"/><rect x="223.6" y="0" width="1" height="18" fill="#000" fill-opacity="0.22"/><rect x="228.6" y="0" width="1" height="18" fill="#000" fill-opacity="0.22"/><rect x="233.6" y="0" width="1" height="18" fill="#000" fill-opacity="0.22"/><rect x="238.6" y="0" width="1" height="18" fill="#000" fill-opacity="0.22"/><rect x="243.5" y="0" width="1" height="18" fill="#000" fill-opacity="0.22"/><rect x="248.5" y="0" width="1" height="18" fill="#000" fill-opacity="0.22"/><rect x="253.5" y="0" width="1" height="18" fill="#000" fill-opacity="0.22"/><rect x="258.5" y="0" width="1" height="18" fill="#000" fill-opacity="0.22"/><rect x="263.5" y="0" width="1" height="18" fill="#000" fill-opacity="0.22"/><rect x="268.4" y="0" width="1" height="18" fill="#000" fill-opacity="0.22"/><rect x="273.4" y="0" width="1" height="18" fill="#000" fill-opacity="0.22"/><rect x="278.4" y="0" width="1" height="18" fill="#000" fill-opacity="0.22"/><rect x="283.4" y="0" width="1" height="18" fill="#000" fill-opacity="0.22"/><rect x="288.4" y="0" width="1" height="18" fill="#000" fill-opacity="0.22"/><rect x="293.3" y="0" width="1" height="18" fill="#000" fill-opacity="0.22"/><rect x="298.3" y="0" width="1" height="18" fill="#000" fill-opacity="0.22"/><rect x="303.3" y="0" width="1" height="18" fill="#000" fill-opacity="0.22"/><rect x="308.3" y="0" width="1" height="18" fill="#000" fill-opacity="0.22"/><rect x="313.3" y="0" width="1" height="18" fill="#000" fill-opacity="0.22"/><rect x="318.2" y="0" width="1" height="18" fill="#000" fill-opacity="0.22"/><rect x="323.2" y="0" width="1" height="18" fill="#000" fill-opacity="0.22"/><rect x="328.2" y="0" width="1" height="18" fill="#000" fill-opacity="0.22"/><rect x="333.2" y="0" width="1" height="18" fill="#000" fill-opacity="0.22"/><rect x="338.2" y="0" width="1" height="18" fill="#000" fill-opacity="0.22"/><rect x="343.1" y="0" width="1" height="18" fill="#000" fill-opacity="0.22"/><rect x="348.1" y="0" width="1" height="18" fill="#000" fill-opacity="0.22"/><rect x="353.1" y="0" width="1" height="18" fill="#000" fill-opacity="0.22"/><rect x="358.1" y="0" width="1" height="18" fill="#000" fill-opacity="0.22"/><rect x="363.1" y="0" width="1" height="18" fill="#000" fill-opacity="0.22"/><rect x="368.0" y="0" width="1" height="18" fill="#000" fill-opacity="0.22"/><rect x="373.0" y="0" width="1" height="18" fill="#000" fill-opacity="0.22"/><rect x="378.0" y="0" width="1" height="18" fill="#000" fill-opacity="0.22"/><rect x="383.0" y="0" width="1" height="18" fill="#000" fill-opacity="0.22"/><rect x="388.0" y="0" width="1" height="18" fill="#000" fill-opacity="0.22"/><rect x="392.9" y="0" width="1" height="18" fill="#000" fill-opacity="0.22"/><rect x="397.9" y="0" width="1" height="18" fill="#000" fill-opacity="0.22"/><rect x="402.9" y="0" width="1" height="18" fill="#000" fill-opacity="0.22"/><rect x="407.9" y="0" width="1" height="18" fill="#000" fill-opacity="0.22"/><rect x="412.9" y="0" width="1" height="18" fill="#000" fill-opacity="0.22"/><rect x="417.8" y="0" width="1" height="18" fill="#000" fill-opacity="0.22"/><rect x="422.8" y="0" width="1" height="18" fill="#000" fill-opacity="0.22"/><rect x="427.8" y="0" width="1" height="18" fill="#000" fill-opacity="0.22"/><rect x="432.8" y="0" width="1" height="18" fill="#000" fill-opacity="0.22"/><rect x="437.8" y="0" width="1" height="18" fill="#000" fill-opacity="0.22"/><rect x="442.7" y="0" width="1" height="18" fill="#000" fill-opacity="0.22"/><rect x="447.7" y="0" width="1" height="18" fill="#000" fill-opacity="0.22"/><rect x="452.7" y="0" width="1" height="18" fill="#000" fill-opacity="0.22"/><rect x="457.7" y="0" width="1" height="18" fill="#000" fill-opacity="0.22"/><rect x="462.7" y="0" width="1" height="18" fill="#000" fill-opacity="0.22"/><rect x="467.6" y="0" width="1" height="18" fill="#000" fill-opacity="0.22"/><rect x="472.6" y="0" width="1" height="18" fill="#000" fill-opacity="0.22"/><rect x="477.6" y="0" width="1" height="18" fill="#000" fill-opacity="0.22"/><rect x="482.6" y="0" width="1" height="18" fill="#000" fill-opacity="0.22"/><rect x="487.6" y="0" width="1" height="18" fill="#000" fill-opacity="0.22"/><rect x="492.5" y="0" width="1" height="18" fill="#000" fill-opacity="0.22"/><rect x="497.5" y="0" width="1" height="18" fill="#000" fill-opacity="0.22"/><rect x="502.5" y="0" width="1" height="18" fill="#000" fill-opacity="0.22"/><rect x="507.5" y="0" width="1" height="18" fill="#000" fill-opacity="0.22"/><rect x="512.5" y="0" width="1" height="18" fill="#000" fill-opacity="0.22"/><rect x="517.4" y="0" width="1" height="18" fill="#000" fill-opacity="0.22"/><rect x="522.4" y="0" width="1" height="18" fill="#000" fill-opacity="0.22"/><rect x="527.4" y="0" width="1" height="18" fill="#000" fill-opacity="0.22"/><rect x="532.4" y="0" width="1" height="18" fill="#000" fill-opacity="0.22"/><rect x="537.4" y="0" width="1" height="18" fill="#000" fill-opacity="0.22"/><rect x="542.3" y="0" width="1" height="18" fill="#000" fill-opacity="0.22"/><rect x="547.3" y="0" width="1" height="18" fill="#000" fill-opacity="0.22"/><rect x="552.3" y="0" width="1" height="18" fill="#000" fill-opacity="0.22"/><rect x="557.3" y="0" width="1" height="18" fill="#000" fill-opacity="0.22"/><rect x="562.3" y="0" width="1" height="18" fill="#000" fill-opacity="0.22"/><rect x="567.2" y="0" width="1" height="18" fill="#000" fill-opacity="0.22"/><rect x="572.2" y="0" width="1" height="18" fill="#000" fill-opacity="0.22"/><rect x="577.2" y="0" width="1" height="18" fill="#000" fill-opacity="0.22"/><rect x="582.2" y="0" width="1" height="18" fill="#000" fill-opacity="0.22"/><rect x="587.2" y="0" width="1" height="18" fill="#000" fill-opacity="0.22"/><rect x="592.1" y="0" width="1" height="18" fill="#000" fill-opacity="0.22"/><rect x="597.1" y="0" width="1" height="18" fill="#000" fill-opacity="0.22"/><rect x="602.1" y="0" width="1" height="18" fill="#000" fill-opacity="0.22"/><rect x="607.1" y="0" width="1" height="18" fill="#000" fill-opacity="0.22"/><rect x="612.1" y="0" width="1" height="18" fill="#000" fill-opacity="0.22"/><rect x="617.0" y="0" width="1" height="18" fill="#000" fill-opacity="0.22"/><rect x="622.0" y="0" width="1" height="18" fill="#000" fill-opacity="0.22"/><rect x="627.0" y="0" width="1" height="18" fill="#000" fill-opacity="0.22"/><rect x="632.0" y="0" width="1" height="18" fill="#000" fill-opacity="0.22"/><rect x="637.0" y="0" width="1" height="18" fill="#000" fill-opacity="0.22"/><rect x="641.9" y="0" width="1" height="18" fill="#000" fill-opacity="0.22"/><rect x="646.9" y="0" width="1" height="18" fill="#000" fill-opacity="0.22"/><rect x="651.9" y="0" width="1" height="18" fill="#000" fill-opacity="0.22"/><rect x="656.9" y="0" width="1" height="18" fill="#000" fill-opacity="0.22"/><rect x="661.9" y="0" width="1" height="18" fill="#000" fill-opacity="0.22"/><rect x="666.8" y="0" width="1" height="18" fill="#000" fill-opacity="0.22"/><rect x="671.8" y="0" width="1" height="18" fill="#000" fill-opacity="0.22"/><rect x="676.8" y="0" width="1" height="18" fill="#000" fill-opacity="0.22"/><rect x="681.8" y="0" width="1" height="18" fill="#000" fill-opacity="0.22"/><rect x="686.8" y="0" width="1" height="18" fill="#000" fill-opacity="0.22"/><rect x="691.7" y="0" width="1" height="18" fill="#000" fill-opacity="0.22"/><rect x="696.7" y="0" width="1" height="18" fill="#000" fill-opacity="0.22"/><rect x="701.7" y="0" width="1" height="18" fill="#000" fill-opacity="0.22"/><rect x="706.7" y="0" width="1" height="18" fill="#000" fill-opacity="0.22"/><rect x="711.7" y="0" width="1" height="18" fill="#000" fill-opacity="0.22"/><rect x="716.6" y="0" width="1" height="18" fill="#000" fill-opacity="0.22"/><rect x="721.6" y="0" width="1" height="18" fill="#000" fill-opacity="0.22"/><rect x="726.6" y="0" width="1" height="18" fill="#000" fill-opacity="0.22"/><rect x="731.6" y="0" width="1" height="18" fill="#000" fill-opacity="0.22"/><rect x="736.6" y="0" width="1" height="18" fill="#000" fill-opacity="0.22"/><rect x="741.5" y="0" width="1" height="18" fill="#000" fill-opacity="0.22"/><rect x="746.5" y="0" width="1" height="18" fill="#000" fill-opacity="0.22"/><rect x="751.5" y="0" width="1" height="18" fill="#000" fill-opacity="0.22"/><rect x="756.5" y="0" width="1" height="18" fill="#000" fill-opacity="0.22"/><rect x="761.5" y="0" width="1" height="18" fill="#000" fill-opacity="0.22"/><rect x="766.4" y="0" width="1" height="18" fill="#000" fill-opacity="0.22"/><rect x="771.4" y="0" width="1" height="18" fill="#000" fill-opacity="0.22"/><rect x="776.4" y="0" width="1" height="18" fill="#000" fill-opacity="0.22"/><rect x="781.4" y="0" width="1" height="18" fill="#000" fill-opacity="0.22"/><rect x="786.4" y="0" width="1" height="18" fill="#000" fill-opacity="0.22"/><rect x="791.3" y="0" width="1" height="18" fill="#000" fill-opacity="0.22"/><rect x="796.3" y="0" width="1" height="18" fill="#000" fill-opacity="0.22"/><rect x="801.3" y="0" width="1" height="18" fill="#000" fill-opacity="0.22"/><rect x="806.3" y="0" width="1" height="18" fill="#000" fill-opacity="0.22"/><rect x="811.3" y="0" width="1" height="18" fill="#000" fill-opacity="0.22"/><rect x="816.2" y="0" width="1" height="18" fill="#000" fill-opacity="0.22"/><rect x="821.2" y="0" width="1" height="18" fill="#000" fill-opacity="0.22"/><rect x="826.2" y="0" width="1" height="18" fill="#000" fill-opacity="0.22"/><rect x="831.2" y="0" width="1" height="18" fill="#000" fill-opacity="0.22"/><rect x="836.2" y="0" width="1" height="18" fill="#000" fill-opacity="0.22"/><rect x="841.1" y="0" width="1" height="18" fill="#000" fill-opacity="0.22"/><rect x="846.1" y="0" width="1" height="18" fill="#000" fill-opacity="0.22"/><rect x="851.1" y="0" width="1" height="18" fill="#000" fill-opacity="0.22"/><rect x="856.1" y="0" width="1" height="18" fill="#000" fill-opacity="0.22"/><rect x="861.1" y="0" width="1" height="18" fill="#000" fill-opacity="0.22"/><rect x="866.0" y="0" width="1" height="18" fill="#000" fill-opacity="0.22"/><rect x="871.0" y="0" width="1" height="18" fill="#000" fill-opacity="0.22"/><rect x="876.0" y="0" width="1" height="18" fill="#000" fill-opacity="0.22"/><rect x="881.0" y="0" width="1" height="18" fill="#000" fill-opacity="0.22"/><rect x="886.0" y="0" width="1" height="18" fill="#000" fill-opacity="0.22"/><rect x="890.9" y="0" width="1" height="18" fill="#000" fill-opacity="0.22"/><rect x="895.9" y="0" width="1" height="18" fill="#000" fill-opacity="0.22"/><rect x="900.9" y="0" width="1" height="18" fill="#000" fill-opacity="0.22"/></svg>
<svg class="a" style="left:0;top:0" width="1677" height="920" viewBox="0 0 1677 920"><defs><clipPath id="pc"><rect x="101" y="249" width="1464" height="671"/></clipPath></defs><g clip-path="url(#pc)"><polyline points="100.3,810.5 115.1,810.5 186.9,828.0 249.0,754.5 268.3,757.1 273.6,758.9 315.6,821.9 345.0,824.5 347.0,825.4 366.3,825.4 381.1,821.0 387.3,800.0 393.4,779.9 407.4,753.6 419.7,766.8 422.3,773.8 431.0,821.9 439.8,828.0 452.9,836.8 471.3,828.9 481.0,815.8 490.6,821.0 496.7,819.6 503.7,824.5 512.4,836.8 528.2,826.3 534.3,828.0 541.3,821.0 548.3,817.5 555.0,802.7 560.6,810.5 566.7,826.3 572.8,832.4 578.1,821.9 584.2,818.4 588.5,826.3 592.9,812.3 598.1,773.8 602.5,772.0 613.9,832.4 627.0,819.3 631.4,828.0 640.1,785.1 648.9,820.2 655.0,817.5 660.3,819.3 666.4,814.0 670.8,794.8 674.6,763.3 680.4,811.4 684.8,808.8 690.0,835.0 696.2,814.9 700.5,800.9 707.5,811.4 712.8,803.5 718.0,802.7 721.6,805.3 726.8,775.5 732.1,805.3 739.0,801.8 743.4,801.8 747.8,791.3 749.6,795.6 760.1,793.9 767.1,786.9 774.1,782.5 786.3,771.1 791.6,771.1 803.8,755.4 809.1,757.1 812.5,753.7 819.0,744.6 825.7,738.8 838.8,717.4 847.9,696.8 855.3,682.8 861.9,668.0 865.2,654.8 868.5,640.0 870.5,630.0 873.3,611.5 878.4,578.5 881.0,566.3 888.9,474.5 892.3,382.8 893.8,291.0 895.5,249.5 897.2,291.0 899.1,382.8 902.5,474.5 909.3,566.3 912.4,590.9 919.6,632.1 921.7,652.7 928.9,675.4 931.0,686.7 935.1,696.0 938.2,710.4 944.0,725.9 945.5,729.8 946.7,731.5 948.5,738.3 950.0,740.4 951.8,745.8 953.3,750.6 955.1,752.9 956.9,753.7 958.1,758.7 959.6,760.0 961.4,761.4 962.6,765.2 964.1,766.0 965.3,769.2 966.5,769.9 968.3,774.5 969.8,775.3 971.6,776.6 972.8,781.2 974.3,783.6 975.5,787.4 976.7,786.9 978.2,791.3 979.4,792.9 980.9,795.6 982.7,795.2 984.5,800.8 986.0,799.7 987.2,800.9 989.0,805.1 990.8,808.8 992.0,808.1 993.0,811.5 994.0,811.9 995.0,810.5 996.3,816.3 997.3,815.5 998.6,818.6 999.6,818.8 1000.9,814.5 1001.9,813.8 1003.9,821.1 1005.2,822.0 1006.8,818.7 1008.4,825.0 1009.7,829.0 1011.0,829.9 1012.6,833.1 1013.6,833.1 1014.9,826.3 1016.5,830.3 1018.5,829.3 1020.1,831.1 1021.4,834.8 1022.7,828.8 1023.7,828.8 1025.3,830.7 1027.3,830.8 1028.3,842.0 1030.3,837.9 1032.3,837.8 1034.3,840.1 1035.9,836.8 1037.5,833.1 1039.5,829.2 1041.0,767.0 1042.5,827.5 1043.5,837.6 1045.5,837.0 1047.1,833.2 1048.7,826.4 1049.7,835.3 1050.7,833.1 1052.7,839.5 1054.0,837.6 1055.3,828.5 1057.3,837.4 1058.3,836.7 1059.9,837.8 1061.2,838.0 1062.8,828.5 1064.8,838.1 1066.8,834.6 1068.1,835.4 1069.4,836.2 1070.7,841.3 1072.0,836.3 1073.6,834.2 1075.2,836.0 1076.8,839.8 1077.8,833.8 1079.8,839.0 1081.8,831.6 1083.8,832.0 1085.8,834.5 1086.8,837.9 1088.8,842.0 1090.1,840.4 1091.1,838.7 1092.1,831.1 1093.7,831.5 1094.7,835.6 1096.7,835.4 1098.0,828.4 1099.6,826.0 1101.6,837.0 1103.6,839.6 1105.6,833.9 1106.6,834.1 1108.2,833.8 1109.5,829.8 1110.5,835.4 1112.1,842.0 1113.4,833.3 1115.0,826.4 1116.0,831.2 1117.6,830.7 1118.9,831.6 1120.5,835.4 1121.8,829.5 1123.1,828.7 1124.4,835.1 1125.7,828.9 1127.0,748.0 1129.0,834.6 1130.3,830.2 1131.9,826.0 1133.5,834.5 1135.1,835.6 1137.1,835.2 1138.4,832.1 1139.4,837.1 1141.4,837.5 1142.4,833.1 1143.4,839.1 1144.7,831.9 1146.7,836.4 1148.3,832.1 1149.3,836.6 1151.3,826.0 1153.3,826.0 1154.6,836.8 1155.9,835.5 1157.9,834.3 1159.2,830.4 1161.2,830.0 1162.8,835.5 1163.8,838.1 1164.8,836.8 1165.8,829.2 1167.1,826.1 1168.4,835.0 1169.4,834.2 1170.7,837.0 1172.3,834.5 1173.6,837.9 1174.6,837.8 1176.6,833.2 1178.6,837.2 1179.9,828.3 1181.2,836.9 1183.2,838.4 1184.5,834.0 1185.8,833.8 1187.1,840.9 1188.1,843.3 1189.1,838.1 1191.1,842.6 1192.1,840.8 1193.4,838.6 1195.0,840.5 1197.0,839.8 1198.0,839.7 1200.0,831.2 1201.6,833.8 1202.9,834.9 1204.5,833.7 1206.0,824.0 1207.8,836.7 1209.4,831.4 1210.7,838.2 1211.7,837.1 1213.7,837.2 1215.0,839.1 1217.0,843.8 1218.0,842.6 1219.3,844.7 1220.9,838.5 1222.2,838.8 1224.2,840.9 1225.5,839.4 1227.5,837.5 1228.8,845.4 1230.1,840.2 1232.1,843.0 1234.1,839.9 1236.0,819.0 1238.0,837.2 1239.0,841.9 1241.0,837.3 1242.0,843.0 1243.0,846.3 1244.0,840.2 1245.0,839.2 1246.3,840.1 1247.9,839.5 1249.5,832.5 1251.5,842.1 1253.5,846.3 1255.1,841.9 1256.4,840.4 1258.4,841.6 1259.4,837.9 1260.4,839.2 1261.7,837.6 1262.7,838.5 1263.7,840.7 1265.3,843.2 1266.9,839.9 1268.2,844.7 1269.2,841.9 1270.5,839.6 1272.1,841.4 1273.7,837.2 1275.7,838.1 1277.0,837.9 1278.6,845.2 1279.6,846.4 1280.9,841.4 1282.9,839.7 1284.9,843.1 1286.9,832.8 1288.5,835.3 1289.8,841.4 1291.1,839.2 1293.1,847.0 1294.4,840.9 1295.4,844.8 1297.0,843.0 1299.0,840.8 1301.0,840.7 1302.6,834.9 1303.6,834.8 1305.6,839.1 1306.6,841.6 1308.2,837.5 1309.8,841.1 1311.1,846.8 1312.4,842.5 1314.0,841.2 1315.0,842.5 1317.0,838.9 1318.3,844.2 1319.3,845.9 1320.6,844.3 1322.6,837.2 1324.2,836.7 1325.8,837.4 1327.1,837.5 1329.1,839.1 1331.1,833.3 1332.4,836.5 1333.7,843.3 1334.7,842.7 1336.7,834.8 1338.0,843.0 1339.0,836.8 1341.0,822.0 1342.9,836.3 1343.9,841.1 1344.9,835.7 1346.9,834.3 1348.5,844.3 1349.5,840.4 1350.5,839.3 1351.5,835.0 1353.1,838.6 1354.4,844.9 1356.4,836.9 1358.4,838.6 1360.0,839.4 1361.3,834.1 1362.3,835.2 1363.9,836.1 1365.2,839.6 1366.8,839.2 1367.8,837.1 1369.4,833.5 1371.0,833.7 1372.0,838.6 1373.3,838.3 1375.3,840.2 1376.3,839.0 1378.3,840.4 1379.9,833.3 1381.2,842.8 1382.2,838.2 1383.8,837.8 1385.4,843.2 1387.0,845.0 1388.0,839.7 1390.0,836.7 1392.0,838.7 1394.0,839.0 1396.0,834.2 1398.0,841.0 1399.6,838.2 1402.0,811.0 1404.2,841.6 1405.2,841.9 1406.2,838.8 1407.8,838.9 1409.8,840.3 1410.8,836.9 1412.4,841.4 1413.4,839.4 1415.0,840.2 1416.3,839.3 1417.9,841.9 1419.2,840.6 1421.2,830.2 1422.2,836.5 1423.5,831.4 1424.5,840.4 1426.5,838.9 1427.8,834.9 1428.8,833.4 1430.1,837.1 1431.7,839.6 1433.3,836.7 1434.9,842.1 1438.0,812.0 1439.9,836.4 1441.2,838.0 1443.2,832.7 1444.8,834.0 1446.8,831.4 1448.1,836.9 1449.1,838.3 1450.7,840.7 1452.0,832.7 1453.3,840.0 1454.3,837.0 1456.3,832.5 1457.6,832.8 1458.6,837.5 1460.6,834.7 1461.9,844.0 1463.2,844.0 1465.2,842.4 1468.0,797.0 1469.8,837.8 1471.8,839.2 1473.8,840.4 1475.8,837.1 1477.8,836.3 1479.1,837.8 1480.4,831.1 1482.4,834.0 1483.4,834.5 1484.7,835.3 1486.0,834.9 1487.6,835.3 1488.9,832.7 1490.9,832.0 1491.9,837.5 1493.2,838.1 1495.0,805.0 1497.2,828.0 1498.8,830.6 1500.4,830.1 1502.4,828.6 1503.7,833.3 1505.7,835.1 1507.3,838.0 1509.3,837.3 1510.3,836.1 1511.9,841.4 1513.2,831.8 1515.2,835.2 1516.8,834.8 1519.0,795.0 1521.0,844.0 1522.3,838.7 1523.9,839.2 1524.9,840.8 1526.2,836.0 1527.5,828.1 1528.5,834.8 1529.8,836.8 1530.8,835.6 1532.1,831.0 1533.4,837.6 1535.4,831.0 1537.0,836.5 1538.0,844.0 1540.0,795.0 1542.9,844.0 1543.9,836.0 1545.5,841.4 1547.1,835.7 1548.1,836.5 1549.7,839.4 1550.7,838.7 1552.0,832.2 1553.6,839.3 1555.6,841.6 1556.9,840.3 1559.0,810.0 1561.7,835.3 1563.0,864.0" fill="none" stroke="#ff0000" stroke-width="1" stroke-linejoin="miter"/><polyline points="100.3,855.7 121.3,856.0 186.9,862.2 221.0,808.8 248.2,759.8 272.7,758.0 299.8,826.3 316.5,870.0 332.2,875.3 345.0,859.6 351.4,851.7 366.3,868.3 381.1,866.6 386.4,835.0 396.0,787.8 407.4,756.3 420.5,777.3 430.2,836.8 442.4,843.8 452.9,870.9 462.5,877.0 471.3,877.0 480.9,864.8 489.7,877.9 504.6,854.6 512.4,874.4 519.4,850.8 527.3,853.4 535.2,841.2 540.5,821.9 549.2,832.4 554.5,825.9 565.8,868.3 577.2,839.4 583.3,863.1 589.4,857.8 594.6,831.5 599.0,777.3 603.4,775.5 613.9,846.4 618.3,848.2 622.6,839.4 628.8,848.7 635.8,835.0 640.1,805.3 648.9,842.9 655.0,835.0 660.3,836.8 665.5,832.4 667.3,836.8 669.9,787.8 674.3,766.8 681.3,842.0 685.7,829.8 690.9,840.3 695.3,815.8 697.9,845.5 701.4,811.4 704.0,840.3 708.4,824.5 714.6,819.3 719.8,815.8 721.6,819.3 726.8,786.0 732.9,814.9 739.0,809.7 745.2,813.2 748.7,800.0 749.6,805.3 761.8,798.3 774.1,790.4 786.3,775.5 789.0,786.0 790.7,775.5 803.8,762.4 809.2,757.8 819.0,745.8 825.7,739.6 838.8,718.0 847.9,696.8 855.3,682.8 861.9,668.0 865.2,654.8 868.5,640.0 870.5,630.0 873.3,611.5 878.4,578.5 881.0,566.3 888.9,474.5 892.3,382.8 893.8,291.0 895.5,249.5 897.2,291.0 899.1,382.8 902.5,474.5 909.3,566.3 912.4,590.9 919.6,632.1 921.7,652.7 928.9,675.4 931.0,686.7 935.1,696.0 938.2,710.4 944.0,727.5 945.5,732.8 946.7,734.2 948.5,737.2 950.0,740.3 951.8,746.6 953.3,750.4 955.1,754.5 956.9,755.8 958.1,762.1 959.6,764.9 961.4,765.1 962.6,767.8 964.1,770.8 965.3,771.5 966.5,772.1 968.3,777.7 969.8,783.6 971.6,783.6 972.8,789.9 974.3,790.9 975.5,791.8 976.7,792.4 978.2,795.1 979.4,796.4 980.9,799.5 982.7,803.8 984.5,806.0 986.0,808.3 987.2,812.3 989.0,815.0 990.8,812.0 994.3,829.8 997.8,821.0 1001.3,825.4 1003.9,842.0 1006.5,838.5 1010.9,843.8 1013.5,833.3 1018.8,856.0 1022.3,843.8 1028.4,866.6 1031.9,856.0 1036.3,815.8 1038.9,856.0 1040.0,800.0 1041.5,768.5 1043.0,772.0 1044.2,790.0 1045.0,863.0 1047.0,849.6 1048.2,866.0 1049.2,845.6 1051.0,861.8 1052.0,862.8 1053.5,863.5 1055.0,866.1 1056.5,859.2 1057.5,888.7 1059.0,868.3 1060.5,846.8 1062.0,876.6 1063.0,866.1 1064.0,865.4 1065.8,858.2 1067.6,867.1 1069.4,839.7 1070.6,862.7 1072.1,859.1 1073.3,853.6 1074.8,853.8 1076.6,847.5 1077.6,873.0 1078.8,859.7 1080.6,865.5 1081.6,855.4 1083.1,850.2 1084.3,881.7 1085.3,864.1 1086.8,857.2 1088.6,855.5 1090.4,889.7 1091.6,866.8 1092.8,871.4 1094.0,873.4 1095.0,866.6 1096.5,854.1 1098.0,847.5 1099.2,871.3 1101.0,864.4 1102.2,870.9 1103.7,875.0 1105.2,855.6 1106.2,838.0 1107.4,875.7 1108.4,846.2 1109.4,838.0 1110.4,838.0 1112.2,858.2 1113.7,869.9 1114.7,866.3 1115.7,874.0 1116.9,892.5 1117.9,854.3 1119.7,875.9 1121.2,868.0 1122.2,847.4 1123.2,847.1 1124.7,845.1 1127.0,752.0 1129.3,863.0 1130.3,867.0 1131.8,853.0 1133.0,856.5 1134.0,857.6 1135.8,857.1 1136.8,859.6 1138.6,858.1 1139.6,855.6 1140.8,853.4 1142.3,865.1 1143.8,859.7 1145.3,863.2 1147.1,843.3 1148.6,868.3 1149.8,854.9 1150.8,867.3 1152.6,872.7 1153.6,858.0 1155.4,851.7 1156.6,854.5 1157.8,874.0 1159.6,866.3 1160.6,840.5 1161.8,845.5 1163.0,854.1 1164.2,865.4 1165.2,872.7 1166.4,872.8 1167.9,883.1 1169.7,886.1 1171.2,891.7 1173.0,877.7 1174.0,878.5 1175.2,857.5 1176.4,849.9 1177.6,848.5 1179.4,861.8 1181.2,869.0 1182.4,859.6 1183.6,865.2 1184.8,876.5 1185.8,869.2 1187.3,874.8 1188.8,875.2 1190.6,862.3 1192.4,869.9 1193.9,852.8 1194.9,863.6 1195.9,853.0 1197.1,851.1 1198.9,860.9 1200.7,841.7 1201.9,860.3 1202.9,850.5 1204.1,851.8 1206.0,842.0 1208.4,864.2 1209.4,874.1 1211.2,868.6 1212.4,866.9 1213.4,863.1 1214.6,877.0 1216.1,881.9 1217.3,859.4 1218.5,844.4 1219.5,864.4 1221.0,848.7 1222.2,851.2 1224.0,872.1 1225.2,863.0 1227.0,889.9 1228.2,855.5 1229.4,851.3 1230.9,853.5 1232.7,864.4 1233.9,856.0 1236.0,845.0 1237.2,868.4 1238.2,879.7 1239.2,858.9 1241.0,852.6 1242.0,858.7 1243.8,874.1 1245.3,861.2 1246.5,893.0 1248.0,867.2 1249.2,866.5 1250.4,841.6 1251.9,837.8 1253.4,844.7 1254.9,883.5 1255.9,866.5 1257.4,854.6 1259.2,850.3 1260.2,863.5 1261.4,846.5 1262.4,858.5 1263.4,873.8 1264.9,869.0 1265.9,849.5 1267.7,856.2 1269.2,853.5 1271.0,855.2 1272.2,876.7 1273.4,884.3 1274.6,863.0 1275.8,862.7 1277.3,854.4 1278.3,864.3 1279.3,853.2 1280.8,847.9 1282.6,847.1 1284.4,849.6 1285.6,858.3 1286.6,860.6 1287.6,854.2 1288.6,863.8 1289.6,875.6 1290.8,865.7 1292.0,850.8 1293.8,865.4 1295.0,858.1 1296.0,860.1 1297.8,860.5 1299.6,859.7 1301.4,874.7 1302.6,872.2 1303.8,872.4 1304.8,863.7 1305.8,852.3 1307.3,874.6 1308.3,863.0 1310.1,875.4 1311.6,857.5 1312.8,884.4 1313.8,868.2 1315.3,861.5 1316.5,865.2 1317.7,855.8 1319.2,863.6 1320.4,871.8 1322.2,876.7 1324.0,856.4 1325.8,868.9 1326.8,848.6 1328.6,865.6 1330.1,859.9 1331.3,849.4 1332.5,867.3 1333.7,867.8 1334.9,863.8 1336.4,878.6 1337.4,863.0 1338.4,871.7 1339.4,875.7 1341.0,830.0 1343.1,868.6 1344.1,844.3 1345.9,862.7 1346.9,866.1 1347.9,883.1 1348.9,871.1 1350.4,857.7 1351.6,861.0 1353.1,856.1 1354.1,870.3 1355.6,862.9 1357.1,870.4 1358.6,865.2 1360.4,847.2 1361.9,855.5 1363.7,857.8 1364.7,842.7 1366.2,863.8 1368.0,857.9 1369.2,847.1 1370.2,849.4 1372.0,854.0 1373.0,850.3 1374.0,857.0 1375.0,857.2 1376.2,864.1 1378.0,838.7 1379.5,840.3 1380.7,854.2 1381.9,866.8 1383.7,875.6 1384.7,887.1 1386.5,871.5 1387.5,847.1 1389.0,850.7 1390.8,867.2 1391.8,848.6 1393.3,865.3 1394.5,858.3 1395.7,871.3 1397.5,879.0 1399.3,863.8 1400.5,835.6 1402.0,820.0 1404.8,843.0 1406.3,856.2 1407.8,864.2 1409.0,864.4 1410.2,864.6 1411.4,853.9 1412.6,871.5 1413.8,875.0 1415.3,855.7 1416.5,856.1 1418.0,881.1 1419.0,868.3 1420.2,870.7 1422.0,861.0 1423.5,860.1 1425.0,848.1 1426.0,854.7 1427.5,856.4 1428.5,864.3 1429.5,840.2 1430.7,861.3 1432.2,849.2 1434.0,853.4 1435.0,851.7 1438.0,824.0 1439.8,840.3 1441.0,842.2 1442.5,840.9 1444.0,846.5 1445.8,847.8 1447.0,855.2 1448.2,836.5 1449.7,856.3 1450.7,843.6 1452.5,834.6 1453.7,846.5 1455.2,853.3 1457.0,842.3 1458.0,863.7 1459.2,858.9 1460.4,849.4 1462.2,851.5 1463.4,849.9 1464.9,839.3 1466.4,829.0 1468.0,810.0 1469.8,861.5 1471.3,849.7 1473.1,845.8 1474.9,855.2 1476.7,855.2 1478.2,848.9 1479.7,849.4 1481.5,864.6 1482.7,850.9 1484.5,846.1 1485.5,852.8 1486.7,839.1 1487.9,852.2 1489.1,843.3 1490.9,863.1 1492.7,874.1 1495.0,816.0 1497.2,867.0 1499.0,844.5 1500.2,829.0 1502.0,862.8 1503.5,855.8 1505.0,854.0 1506.8,862.6 1508.6,841.3 1510.1,856.9 1511.3,873.4 1512.3,848.8 1513.3,863.2 1514.5,834.4 1516.0,847.1 1517.0,850.1 1519.0,808.0 1520.7,833.7 1521.9,838.0 1523.7,845.6 1525.5,856.4 1526.7,840.9 1527.7,839.3 1529.2,855.1 1530.2,869.5 1532.0,854.5 1533.0,848.6 1534.5,833.9 1536.3,858.3 1538.1,842.5 1540.0,812.0 1542.1,859.2 1543.3,861.2 1545.1,844.7 1546.6,856.7 1548.4,844.9 1549.4,855.4 1550.4,863.0 1551.4,842.6 1552.9,839.8 1553.9,837.1 1555.1,848.2 1556.1,854.4 1557.3,864.4 1559.0,820.0 1560.3,866.1 1563.0,883.0" fill="none" stroke="#0000ff" stroke-width="1" stroke-linejoin="miter"/></g></svg>
<div class="panel" style="left:113px;top:265px;width:190px;height:151px;border-color:#a8a8a8"><div class="ptitle" style="height:39px"></div></div><div class="a" style="left:124px;top:274px;width:20px;height:20px;border:2px solid #111"></div><div class="a" style="left:130px;top:280px;width:2px;height:6px;background:#333"></div><div class="a" style="left:135px;top:280px;width:2px;height:6px;background:#333"></div><div class="t" style="left:149px;top:278px;font-size:14px;color:#999">SNR</div><svg class="a" style="left:276px;top:278px" width="13" height="13"><path d="M0.5 0.5L12.5 12.5M12.5 0.5L0.5 12.5" stroke="#777" stroke-width="1.1"/></svg><div class="t" style="left:120.6px;top:310.4px;font-size:100.0px;color:#000;-webkit-text-stroke:1.2px #000;transform:scaleX(0.3400);transform-origin:0 0">108.296 dB</div><div class="a" style="left:122px;top:386.5px;width:7px;height:9px;background:#f0f0f0"></div><div class="a" style="left:133px;top:386.5px;width:6px;height:9px;background:#f0f0f0"></div><div class="panel" style="left:307px;top:265px;width:190px;height:151px;border-color:#a8a8a8"><div class="ptitle" style="height:39px"></div></div><div class="a" style="left:318px;top:274px;width:20px;height:20px;border:2px solid #111"></div><div class="a" style="left:324px;top:280px;width:2px;height:6px;background:#333"></div><div class="a" style="left:329px;top:280px;width:2px;height:6px;background:#333"></div><div class="t" style="left:343px;top:278px;font-size:14px;color:#999">THD</div><svg class="a" style="left:470px;top:278px" width="13" height="13"><path d="M0.5 0.5L12.5 12.5M12.5 0.5L0.5 12.5" stroke="#777" stroke-width="1.1"/></svg><div class="t" style="left:314.5px;top:310.4px;font-size:100.0px;color:#000;-webkit-text-stroke:1.2px #000;transform:scaleX(0.3667);transform-origin:0 0">0.00025 %</div><div class="panel" style="left:116px;top:423px;width:190px;height:151px;border-color:#5b9bd5"><div class="ptitle" style="height:39px"></div></div><div class="a" style="left:127px;top:432px;width:20px;height:20px;border:2px solid #111"></div><div class="a" style="left:133px;top:438px;width:2px;height:6px;background:#333"></div><div class="a" style="left:138px;top:438px;width:2px;height:6px;background:#333"></div><div class="t" style="left:152px;top:436px;font-size:14.5px;color:#1a1a1a">THD+N</div><svg class="a" style="left:279px;top:436px" width="13" height="13"><path d="M0.5 0.5L12.5 12.5M12.5 0.5L0.5 12.5" stroke="#222" stroke-width="1.1"/></svg><div class="t" style="left:124.6px;top:468.4px;font-size:100.0px;color:#000;-webkit-text-stroke:1.2px #000;transform:scaleX(0.3603);transform-origin:0 0">0.00038 %</div><div class="panel" style="left:608px;top:710px;width:63px;height:72px"><div class="ptitle" style="height:30px"></div></div><div class="a" style="left:611px;top:715px;width:20px;height:20px;border:2px solid #111"></div><div class="a" style="left:617px;top:721px;width:2px;height:6px;background:#333"></div><div class="a" style="left:622px;top:721px;width:2px;height:6px;background:#333"></div><svg class="a" style="left:644px;top:719px" width="13" height="13"><path d="M0.5 0.5L12.5 12.5M12.5 0.5L0.5 12.5" stroke="#777" stroke-width="1.1"/></svg><div class="a" style="left:614px;top:745px;width:53px;height:32px;background:#ececec;box-shadow:inset 1px 1px 0 #fff,inset -2px -2px 0 #8a8a8a"></div><div class="t" style="left:624px;top:753px;font-size:15px;color:#222">Stop</div>
</body></html>
